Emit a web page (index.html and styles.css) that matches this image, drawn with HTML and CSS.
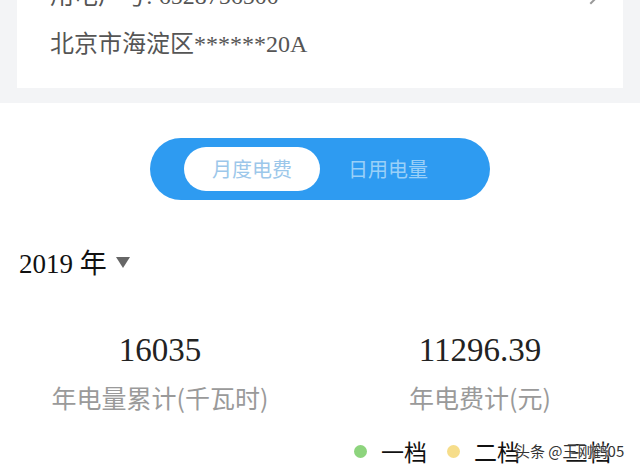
FILE: index.html
```html
<!DOCTYPE html>
<html lang="zh-CN">
<head>
    <meta charset="UTF-8">
    <meta name="viewport" content="width=device-width, initial-scale=1.0">
    <title>电费查询</title>
    <link rel="stylesheet" href="styles.css">
</head>
<body>

    <!-- Account card (scrolled, top line partly hidden) -->
    <div class="top-band">
        <div class="account-card">
            <div class="account-line account-no">用电户号: 6528756500</div>
            <div class="account-line">北京市海淀区******20A</div>
            <span class="chevron"></span>
        </div>
    </div>

    <!-- Tab switch -->
    <div class="switch-wrap">
        <div class="switch">
            <div class="switch-item active">月度电费</div>
            <div class="switch-item">日用电量</div>
        </div>
    </div>

    <div class="year">2019 年 <span class="arrow"></span></div>

    <div class="stats">
        <div class="stat">
            <div class="stat-value">16035</div>
            <div class="stat-label">年电量累计(千瓦时)</div>
        </div>
        <div class="stat">
            <div class="stat-value">11296.39</div>
            <div class="stat-label">年电费计(元)</div>
        </div>
    </div>

    <div class="legend">
        <span class="dot green"></span><span class="legend-text">一档</span>
        <span class="dot yellow"></span><span class="legend-text">二档</span>
        <span class="legend-text third">三档<span class="watermark">头条 @王刚鹤05</span></span>
    </div>

</body>
</html>
```

FILE: styles.css
```css
body {
    margin: 0;
    background-color: #ffffff;
    font-family: "Liberation Serif", "Noto Sans CJK SC", serif;
    width: 640px;
    height: 470px;
    overflow: hidden;
}
.top-band {
    background-color: #f3f4f6;
    padding: 0 17px 15px;
    margin-top: -30px;
}
.account-card {
    background-color: #fff;
    padding: 6px 33px 24px;
    position: relative;
}
.account-line {
    font-size: 24px;
    color: #555;
    line-height: 40px;
}
.account-no {
    margin-bottom: 8px;
}
.chevron {
    position: absolute;
    right: 26px;
    top: 20px;
    width: 10px;
    height: 10px;
    border-top: 2px solid #999;
    border-right: 2px solid #999;
    transform: rotate(45deg);
}
.switch-wrap {
    display: flex;
    justify-content: center;
    padding-top: 35px;
}
.switch {
    display: flex;
    align-items: center;
    width: 340px;
    height: 62px;
    box-sizing: border-box;
    padding: 0 0 0 34px;
    border-radius: 31px;
    background-color: #2e9bf1;
    gap: 28px;
}
.switch-item {
    font-family: "Noto Sans CJK SC", sans-serif;
    font-size: 20px;
    height: 44px;
    line-height: 44px;
    color: #9ad0f8;
}
.switch-item.active {
    width: 136px;
    flex-shrink: 0;
    border-radius: 22px;
    background-color: #fff;
    color: #9cc7ea;
    text-align: center;
}
.year {
    margin: 43px 0 0 19px;
    font-size: 27px;
    color: #111;
    display: flex;
    align-items: center;
    height: 36px;
}
.arrow {
    width: 0;
    height: 0;
    margin-left: 9px;
    margin-top: 3px;
    border-left: 7px solid transparent;
    border-right: 7px solid transparent;
    border-top: 11px solid #666;
}
.stats {
    display: grid;
    grid-template-columns: 320px 320px;
    margin-top: 49px;
}
.stat {
    text-align: center;
}
.stat-value {
    font-size: 33px;
    color: #222;
    line-height: 44px;
}
.stat-label {
    font-family: "Noto Sans CJK SC", sans-serif;
    font-size: 25px;
    color: #9a9a9a;
    line-height: 40px;
    margin-top: 5px;
}
.legend {
    display: flex;
    align-items: center;
    padding-left: 354px;
    margin-top: 17px;
    height: 34px;
    font-family: "Noto Sans CJK SC", sans-serif;
    white-space: nowrap;
}
.dot {
    width: 13px;
    height: 13px;
    border-radius: 50%;
    margin-right: 14px;
    flex-shrink: 0;
}
.green {
    background-color: #8dd47d;
}
.yellow {
    background-color: #f6dd8a;
}
.legend-text {
    font-size: 23px;
    line-height: 34px;
    color: #111;
    margin-right: 20px;
    flex-shrink: 0;
}
.third {
    margin-left: 25px;
    position: relative;
}
.watermark {
    position: absolute;
    left: -50px;
    top: 0;
    font-size: 15px;
    color: #333;
    text-shadow: 0 0 2px #fff, 0 0 2px #fff;
}
```
